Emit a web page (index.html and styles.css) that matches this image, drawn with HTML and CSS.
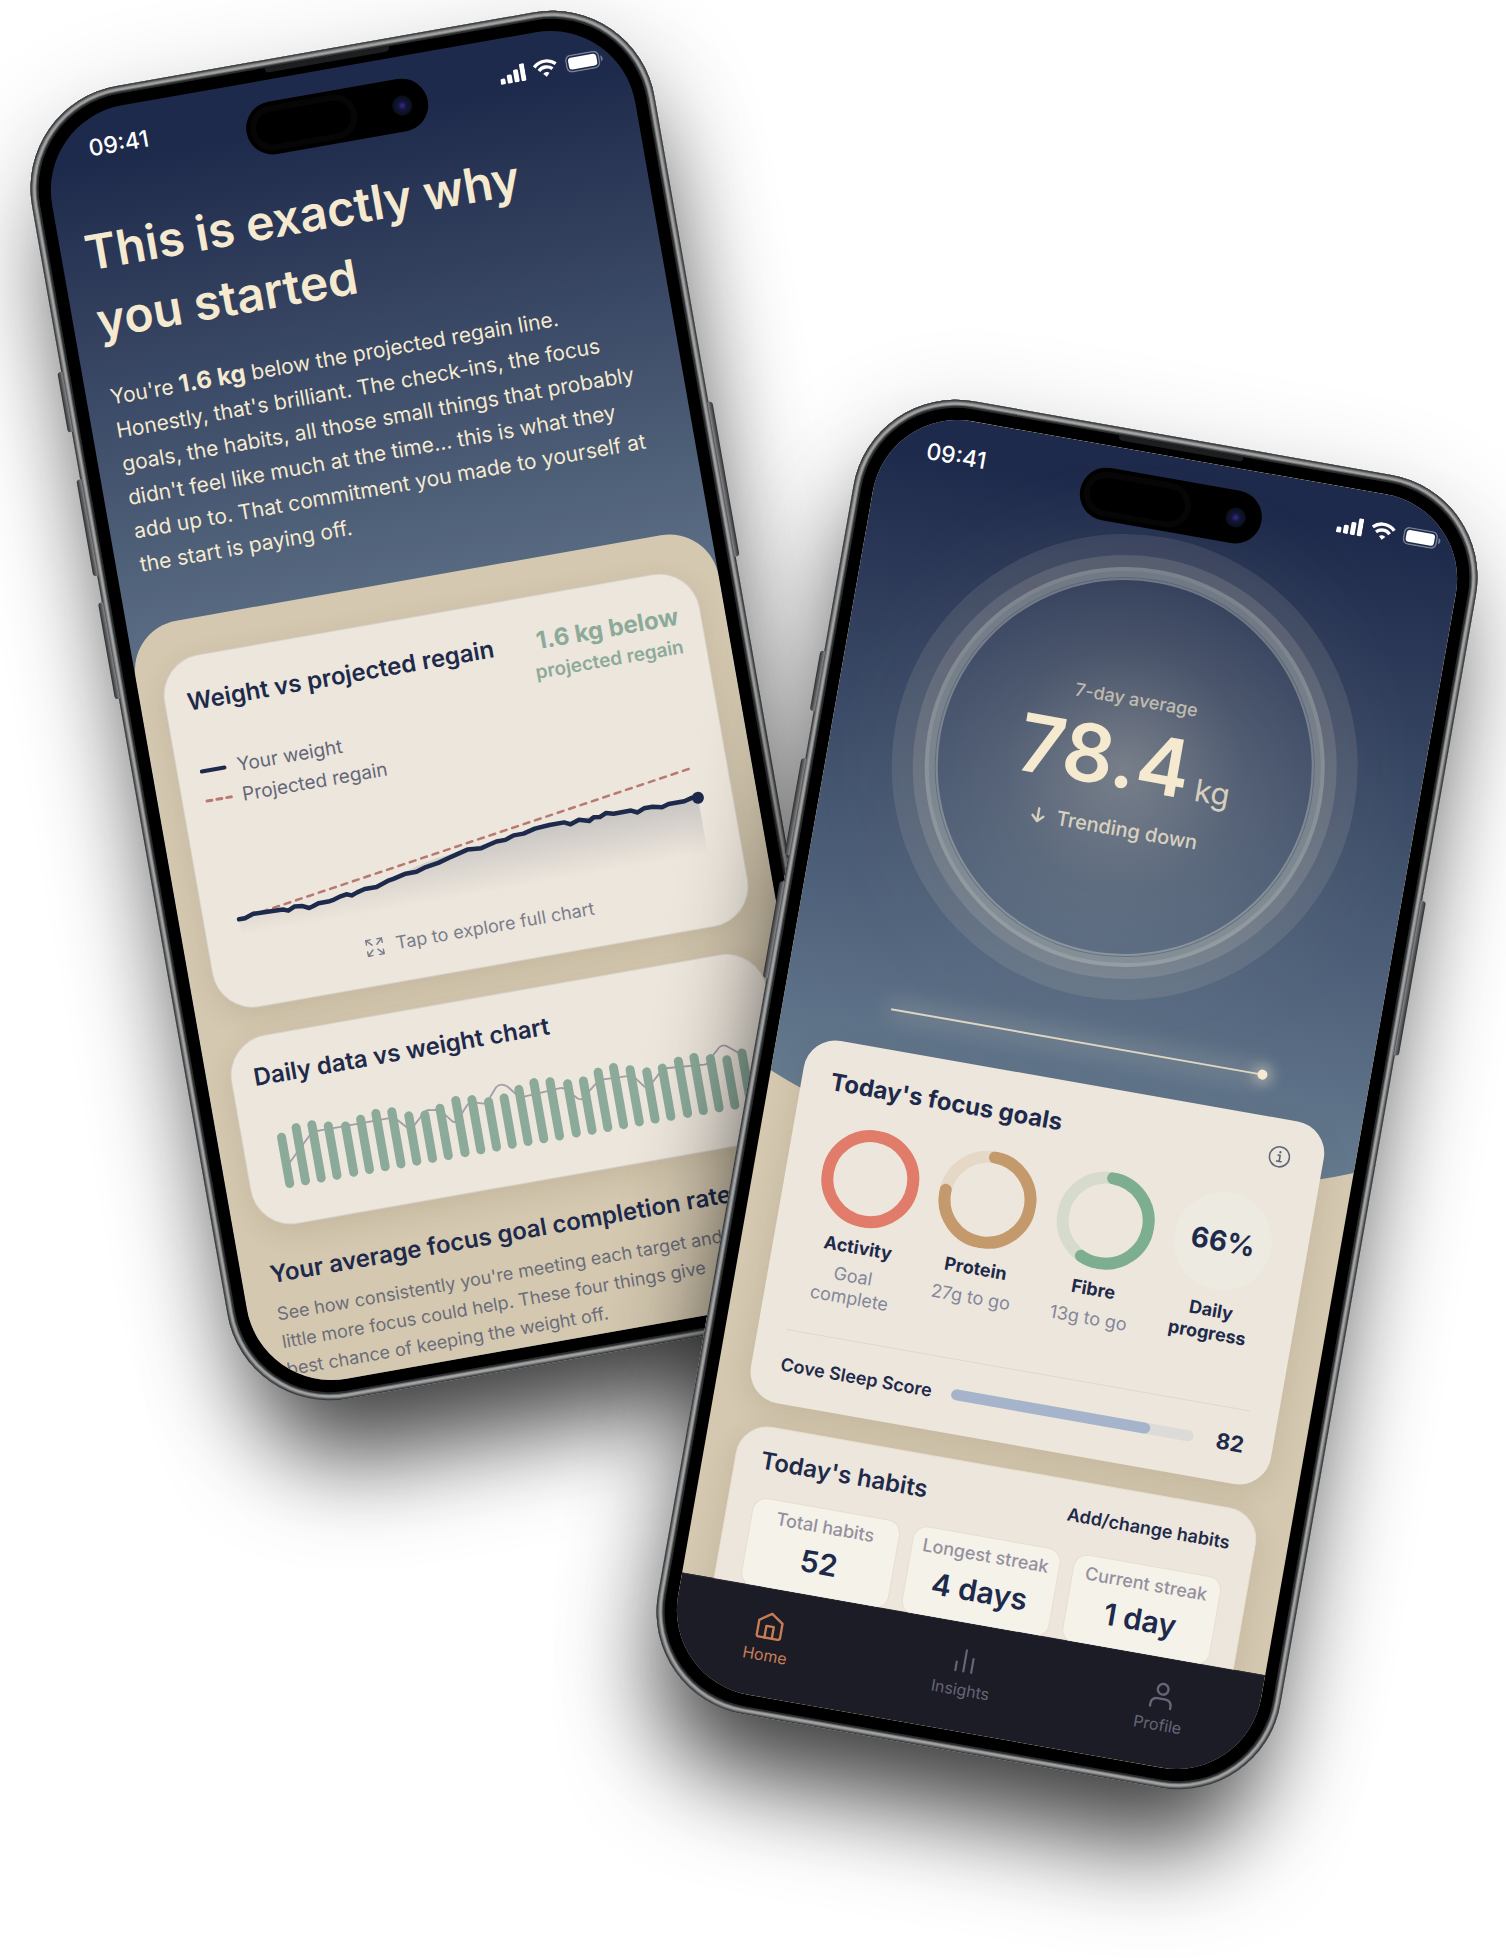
FILE: index.html
```html
<!DOCTYPE html>
<html lang="en">
<head>
    <meta charset="UTF-8">
    <meta name="viewport" content="width=device-width, initial-scale=1">
    <title>Cove</title>
    <link rel="stylesheet" href="styles.css">
</head>
<body>
    <main class="stage">

        <!-- Progress phone -->
        <section class="phone phone-left">
            <span class="side-btn action"></span>
            <span class="side-btn vol-up"></span>
            <span class="side-btn vol-down"></span>
            <span class="side-btn power"></span>
            <div class="bezel">
                <span class="earpiece"></span>
                <div class="screen screen-progress">
                    <div class="status-bar">
                        <span class="time">09:41</span>
                        <span class="status-icons">
                            <svg width="26" height="18" viewBox="0 0 26 18" fill="#fff">
                                <rect x="0" y="12" width="5" height="6" rx="1.5"/>
                                <rect x="7" y="9" width="5" height="9" rx="1.5"/>
                                <rect x="14" y="5" width="5" height="13" rx="1.5"/>
                                <rect x="21" y="0" width="5" height="18" rx="1.5"/>
                            </svg>
                            <svg width="25" height="18" viewBox="0 0 25 18" fill="none" stroke="#fff" stroke-width="3.4">
                                <path d="M1.6 6.4a15.4 15.4 0 0 1 21.8 0"/>
                                <path d="M5.6 10.7a9.7 9.7 0 0 1 13.8 0"/>
                                <path d="M12.5 17.6l-3.2-3.3a4.5 4.5 0 0 1 6.4 0z" fill="#fff" stroke="none"/>
                            </svg>
                            <svg width="38" height="18" viewBox="0 0 38 18">
                                <rect x="0.8" y="0.8" width="33" height="16.4" rx="5" fill="none" stroke="#fff" stroke-opacity=".4" stroke-width="1.4"/>
                                <rect x="3" y="3" width="28.6" height="12" rx="3" fill="#fff"/>
                                <path d="M35.6 6v6c1.3-.5 2-1.7 2-3s-.7-2.5-2-3z" fill="#fff" fill-opacity=".4"/>
                            </svg>
                        </span>
                    </div>
                    <div class="island"><span class="sensor"></span><span class="camera"></span></div>

                    <header class="intro">
                        <h1>This is exactly why<br>you started</h1>
                        <p>You're <strong>1.6 kg</strong> below the projected regain line.<br>Honestly, that's brilliant. The check-ins, the focus goals, the habits, all those small things that probably didn't feel like much at the time... this is what they add up to. That commitment you made to yourself at the start is paying off.</p>
                    </header>

                    <div class="sheet">
                        <article class="card card-weight">
                            <div class="card-head">
                                <h2>Weight vs projected regain</h2>
                                <div class="delta">
                                    <b>1.6 kg below</b>
                                    <span>projected regain</span>
                                </div>
                            </div>
                            <ul class="legend">
                                <li>
                                    <svg width="28" height="6" viewBox="0 0 28 6"><path d="M2 3h23" stroke="#1e2a4b" stroke-width="4" stroke-linecap="round"/></svg>
                                    Your weight
                                </li>
                                <li>
                                    <svg width="28" height="6" viewBox="0 0 28 6"><path d="M2 3h25" stroke="#b87a70" stroke-width="3" stroke-linecap="round" stroke-dasharray="5 5"/></svg>
                                    Projected regain
                                </li>
                            </ul>
                            <svg class="weight-chart" viewBox="0 0 498 110">
                                <defs>
                                    <linearGradient id="area" gradientUnits="userSpaceOnUse" x1="0" y1="44" x2="0" y2="102">
                                        <stop offset="0" stop-color="#1e2a4b" stop-opacity=".18"/>
                                        <stop offset="1" stop-color="#1e2a4b" stop-opacity="0"/>
                                    </linearGradient>
                                </defs>
                                <path fill="url(#area)" d="M13 85L28 82 58 83 84 86 110 82 142 77 166 73 196 64 219 59 250 56 280 52 308 50 320 47 350 46 393 44 418 46 449 48 472 46 486 44V102H13z"/>
                                <path fill="none" stroke="#b87a70" stroke-width="2.5" stroke-linecap="round" stroke-dasharray="6 6" d="M13 85L482 15"/>
                                <path fill="none" stroke="#1e2a4b" stroke-width="4.5" stroke-linecap="round" stroke-linejoin="round" d="M13 85L19 85 28 82 58 83 63 85 70 82 78 83 84 86 88 85 94 83 104 83 110 82 117 80 123 79 128 81 134 79 142 77 154 77 160 75 166 73 172 72 185 69 196 69 206 66 219 64 230 61 238 59 250 56 264 57 272 55 280 53 289 53 298 50 308 50 320 47 335 46 350 46 356 49 365 46 375 49 380 46 386 47 393 44 400 46 418 46 424 49 431 46 440 46 449 48 456 46 472 46 480 44 486 45"/>
                                <circle cx="486" cy="45" r="6" fill="#1e2a4b"/>
                            </svg>
                            <button type="button" class="explore">
                                <svg width="18" height="18" viewBox="0 0 18 18" fill="none" stroke="currentColor" stroke-width="1.5" stroke-linecap="round" stroke-linejoin="round">
                                    <path d="M1 5.5V1h4.5M1 1l5.5 5.5M12.5 1H17v4.5M17 1l-5.5 5.5M1 12.5V17h4.5M1 17l5.5-5.5M12.5 17H17v-4.5M17 17l-5.5-5.5"/>
                                </svg>
                                Tap to explore full chart
                            </button>
                        </article>

                        <article class="card card-daily">
                            <h2>Daily data vs weight chart</h2>
                            <svg class="daily-chart" viewBox="0 0 498 77">
                                <path fill="none" stroke="#a39da8" stroke-width="1.8" stroke-linejoin="round" d="M20 50L46 25Q50 22 56 23L74 23 128 23Q132 23 135 27L143 36Q146 40 149 35L161 24Q164 21 168 22L174 23Q178 24 181 28L188 37Q192 40 195 35L205 24Q208 21 212 22L222 25Q226 25 230 19L237 11Q242 7 248 12L256 22Q260 26 265 25L300 23Q304 23 307 27L315 36Q320 40 324 34L337 24Q340 21 344 22L370 23Q374 23 377 28L383 36Q387 40 390 35L402 24Q405 21 410 22L446 25Q450 25 453 20L463 11Q468 7 473 12L484 21"/>
                                <path fill="none" stroke="#8caa9a" stroke-width="9" stroke-linecap="round" d="M17 70V23M33 70V16M49 70V16M65 70V20M82 70V23M98 70V19M114 70V16M130 70V17M146 70V24M162 70V26M178 70V22M195 70V17M211 70V19M227 70V24M243 70V23M259 70V17M275 70V13M291 70V15M308 70V20M324 70V20M340 70V14M356 70V12M372 70V17M388 70V22M404 70V21M421 70V17M437 70V16M453 70V20M469 70V24M485 70V20"/>
                            </svg>
                        </article>

                        <div class="goal-rate">
                            <h2>Your average focus goal completion rate</h2>
                            <p>See how consistently you're meeting each target and<br>little more focus could help. These four things give<br>best chance of keeping the weight off.</p>
                        </div>
                    </div>
                </div>
            </div>
        </section>

        <!-- Home phone -->
        <section class="phone phone-right">
            <span class="side-btn action"></span>
            <span class="side-btn vol-up"></span>
            <span class="side-btn vol-down"></span>
            <span class="side-btn power"></span>
            <div class="bezel">
                <span class="earpiece"></span>
                <div class="screen screen-home">
                    <div class="home-scroll">
                        <div class="home-sky"></div>
                        <div class="status-bar">
                            <span class="time">09:41</span>
                            <span class="status-icons">
                                <svg width="26" height="18" viewBox="0 0 26 18" fill="#fff">
                                    <rect x="0" y="12" width="5" height="6" rx="1.5"/>
                                    <rect x="7" y="9" width="5" height="9" rx="1.5"/>
                                    <rect x="14" y="5" width="5" height="13" rx="1.5"/>
                                    <rect x="21" y="0" width="5" height="18" rx="1.5"/>
                                </svg>
                                <svg width="25" height="18" viewBox="0 0 25 18" fill="none" stroke="#fff" stroke-width="3.4">
                                    <path d="M1.6 6.4a15.4 15.4 0 0 1 21.8 0"/>
                                    <path d="M5.6 10.7a9.7 9.7 0 0 1 13.8 0"/>
                                    <path d="M12.5 17.6l-3.2-3.3a4.5 4.5 0 0 1 6.4 0z" fill="#fff" stroke="none"/>
                                </svg>
                                <svg width="38" height="18" viewBox="0 0 38 18">
                                    <rect x="0.8" y="0.8" width="33" height="16.4" rx="5" fill="none" stroke="#fff" stroke-opacity=".4" stroke-width="1.4"/>
                                    <rect x="3" y="3" width="28.6" height="12" rx="3" fill="#fff"/>
                                    <path d="M35.6 6v6c1.3-.5 2-1.7 2-3s-.7-2.5-2-3z" fill="#fff" fill-opacity=".4"/>
                                </svg>
                            </span>
                        </div>
                        <div class="island"><span class="sensor"></span><span class="camera"></span></div>

                        <div class="orb">
                            <span class="orb-label">7-day average</span>
                            <div class="orb-value">78.4<small>kg</small></div>
                            <div class="orb-trend">
                                <svg width="14" height="16" viewBox="0 0 14 16" fill="none" stroke="currentColor" stroke-width="2.4" stroke-linecap="round" stroke-linejoin="round">
                                    <path d="M7 1.5v13M1.5 9L7 14.5 12.5 9"/>
                                </svg>
                                Trending down
                            </div>
                        </div>
                        <div class="glow-line"></div>

                        <article class="card card-goals">
                            <div class="card-head">
                                <h2>Today's focus goals</h2>
                                <button type="button" class="info" aria-label="About focus goals">
                                    <svg width="22" height="22" viewBox="0 0 22 22" fill="none" stroke="#5d6678" stroke-width="1.6" stroke-linecap="round" stroke-linejoin="round">
                                        <circle cx="11" cy="11" r="10"/>
                                        <path d="M9.5 9.5h2v6M9 15.5h4.5"/>
                                        <path d="M11.2 6.2v.3" stroke-width="2.2"/>
                                    </svg>
                                </button>
                            </div>
                            <div class="goals">
                                <div class="goal">
                                    <svg class="ring" viewBox="0 0 98 98"><circle cx="49" cy="49" r="43" stroke="#e17c6a"/></svg>
                                    <b>Activity</b>
                                    <span>Goal complete</span>
                                </div>
                                <div class="goal">
                                    <svg class="ring" viewBox="0 0 98 98">
                                        <circle cx="49" cy="49" r="43" stroke="#e5d8c6"/>
                                        <circle cx="49" cy="49" r="43" stroke="#c49a6c" pathLength="100" stroke-dasharray="76 100" stroke-linecap="round"/>
                                    </svg>
                                    <b>Protein</b>
                                    <span>27g to go</span>
                                </div>
                                <div class="goal">
                                    <svg class="ring" viewBox="0 0 98 98">
                                        <circle cx="49" cy="49" r="43" stroke="#d7dbcd"/>
                                        <circle cx="49" cy="49" r="43" stroke="#7dae8f" pathLength="100" stroke-dasharray="57 100" stroke-linecap="round"/>
                                    </svg>
                                    <b>Fibre</b>
                                    <span>13g to go</span>
                                </div>
                                <div class="goal">
                                    <div class="ring percent">66%</div>
                                    <b>Daily progress</b>
                                </div>
                            </div>
                            <div class="sleep">
                                <span>Cove Sleep Score</span>
                                <div class="track"><div class="fill" style="width: 82%"></div></div>
                                <b>82</b>
                            </div>
                        </article>

                        <article class="card card-habits">
                            <div class="card-head">
                                <h2>Today's habits</h2>
                                <a href="#habits">Add/change habits</a>
                            </div>
                            <div class="tiles" id="habits">
                                <div class="tile"><span>Total habits</span><b>52</b></div>
                                <div class="tile"><span>Longest streak</span><b>4 days</b></div>
                                <div class="tile"><span>Current streak</span><b>1 day</b></div>
                            </div>
                        </article>
                    </div>

                    <nav class="tab-bar">
                        <a href="#home" class="active">
                            <svg width="30" height="30" viewBox="0 0 28 28" fill="none" stroke="currentColor" stroke-width="2.2" stroke-linecap="round" stroke-linejoin="round">
                                <path d="M3 9.5L14 2l11 7.5V23a2 2 0 0 1-2 2H5a2 2 0 0 1-2-2z"/>
                                <path d="M10.5 25V14h7v11"/>
                            </svg>
                            Home
                        </a>
                        <a href="#insights">
                            <svg width="30" height="30" viewBox="0 0 28 28" fill="none" stroke="currentColor" stroke-width="2" stroke-linecap="round">
                                <path d="M6.5 24v-8M14 24V4M21.5 24V11"/>
                            </svg>
                            Insights
                        </a>
                        <a href="#profile">
                            <svg width="30" height="30" viewBox="0 0 28 28" fill="none" stroke="currentColor" stroke-width="2.2" stroke-linecap="round" stroke-linejoin="round">
                                <circle cx="14" cy="8" r="5"/>
                                <path d="M4.5 25v-2.5A5.500 5.500 0 0 1 10 17h8a5.500 5.500 0 0 1 5.500 5.500V25"/>
                            </svg>
                            Profile
                        </a>
                    </nav>
                </div>
            </div>
        </section>

    </main>
</body>
</html>
```
FILE: styles.css
```css
* {
    margin: 0;
    padding: 0;
    box-sizing: border-box;
}
body {
    background-color: #fff;
    font-family: Inter, "Liberation Sans", sans-serif;
    color: #1e2a4b;
    overflow: hidden;
}
h2 {
    font-size: 24px;
    line-height: 30px;
    font-weight: 600;
}
a {
    color: inherit;
    text-decoration: none;
}
button {
    font: inherit;
    border: none;
    background: none;
    cursor: pointer;
}
.stage {
    display: flex;
    justify-content: center;
    align-items: flex-start;
    padding: 39px 0 198px 2px;
}

/* device */
.phone {
    position: relative;
    flex: none;
    width: 632px;
    height: 1333px;
    padding: 8px;
    border-radius: 104px;
    background: #3a3b3c;
    box-shadow:
        0 80px 100px -24px rgba(0, 0, 0, .7),
        0 30px 110px rgba(0, 0, 0, .2);
}
.phone::before {
    content: "";
    position: absolute;
    inset: 0;
    border-radius: 104px;
    box-shadow:
        inset 0 0 0 1px #3a3b3c,
        inset 0 0 0 2px #5c5e60,
        inset 0 0 1px 3px #808284,
        inset 0 0 1px 5px #a6a8a9,
        inset 0 0 1px 6px #6c6e6f,
        inset 0 0 0 8px #2a2b2c;
}
.phone-left {
    transform: rotate(-10deg);
}
.phone-right {
    margin-left: -6px;
    margin-top: 389px;
    transform: rotate(10deg);
}
.bezel {
    position: relative;
    height: 100%;
    padding: 12px;
    border-radius: 96px;
    background: #000;
}
.earpiece {
    position: absolute;
    top: 0;
    left: 50%;
    width: 126px;
    height: 5px;
    margin-left: -63px;
    border-radius: 0 0 4px 4px;
    background: #1d1e1f;
}
.side-btn {
    position: absolute;
    left: -4px;
    width: 5px;
    border-radius: 3px 0 0 3px;
    background: linear-gradient(90deg, #2c2d2e, #85878a);
}
.action {
    top: 272px;
    height: 61px;
}
.vol-up {
    top: 381px;
    height: 98px;
}
.vol-down {
    top: 506px;
    height: 98px;
}
.power {
    left: auto;
    right: -4px;
    top: 414px;
    height: 157px;
    border-radius: 0 3px 3px 0;
    background: linear-gradient(270deg, #2c2d2e, #85878a);
}
.screen {
    position: relative;
    height: 100%;
    border-radius: 86px;
    overflow: hidden;
    display: flex;
    flex-direction: column;
}
.status-bar {
    display: flex;
    flex: none;
    justify-content: space-between;
    align-items: center;
    height: 74px;
    padding: 0 24px 0 46px;
    color: #fff;
}
.time {
    font-size: 23px;
    font-weight: 500;
}
.status-icons {
    display: flex;
    align-items: center;
    gap: 8px;
}
.island {
    position: absolute;
    z-index: 1;
    top: 22px;
    left: 50%;
    width: 184px;
    height: 53px;
    margin-left: -92px;
    border-radius: 27px;
    background: #000;
    display: flex;
    align-items: center;
    justify-content: space-between;
    padding: 0 16px 0 4px;
}
.sensor {
    width: 108px;
    height: 45px;
    border-radius: 23px;
    border: 6px solid #060607;
}
.camera {
    width: 20px;
    height: 20px;
    border-radius: 50%;
    background: radial-gradient(circle, #3a2a8c 0, #14143a 30%, #0a1220 60%, #05070b 100%);
}

/* progress screen */
.screen-progress {
    background: linear-gradient(180deg, #1e2a4b 50px, #5a6c83 540px);
}
.intro {
    flex: none;
    padding: 31px 38px 44px 24px;
    color: #f5ead0;
}
.intro h1 {
    font-size: 48px;
    line-height: 69px;
    font-weight: 600;
    margin-bottom: 26px;
}
.intro p {
    font-size: 21px;
    line-height: 34px;
}
.intro strong {
    font-size: 24px;
    line-height: 24px;
    font-weight: 700;
}
.sheet {
    flex: none;
    display: flex;
    flex-direction: column;
    gap: 30px;
    padding: 38px 25px;
    border-radius: 50px 50px 0 0;
    background: #d4c8b0;
}
.card {
    background: #ede6dc;
    border-radius: 40px;
    box-shadow: 0 8px 28px rgba(90, 75, 40, .14);
}
.card-head {
    display: flex;
    justify-content: space-between;
    align-items: flex-start;
}
.sheet .card {
    padding: 30px 22px 25px;
    box-shadow: 0 0 0 1px #d8d1cb, 0 8px 28px rgba(90, 75, 40, .14);
}
.card-weight h2 {
    white-space: nowrap;
}
.delta {
    display: flex;
    flex-direction: column;
    align-items: flex-end;
    color: #8caa9a;
}
.delta b {
    font-size: 24px;
    line-height: 30px;
    font-weight: 700;
}
.delta span {
    font-size: 19px;
    line-height: 32px;
    font-weight: 600;
}
.legend {
    list-style: none;
    margin-top: 8px;
}
.legend li {
    display: flex;
    align-items: center;
    gap: 10px;
    font-size: 19px;
    line-height: 30px;
    color: #646779;
}
.weight-chart {
    display: block;
    width: 100%;
    margin-top: 22px;
    overflow: visible;
}
.explore {
    display: flex;
    align-items: center;
    gap: 12px;
    margin: 13px auto 0;
    font-size: 18px;
    line-height: 26px;
    color: #7a7d8c;
}
.sheet .card-daily {
    padding: 25px 22px 33px;
}
.daily-chart {
    display: block;
    width: 100%;
    margin-top: 25px;
}
.goal-rate {
    padding: 2px 0 0 4px;
}
.goal-rate h2 {
    white-space: nowrap;
}
.goal-rate p {
    margin-top: 11px;
    font-size: 18px;
    line-height: 28px;
    color: #6b6d79;
    white-space: nowrap;
}

/* home screen */
.screen-home {
    background: #d4c8b0;
}
.home-scroll {
    position: relative;
    flex: 1;
    min-height: 0;
    overflow: hidden;
}
.home-scroll > * {
    position: relative;
}
.home-scroll > .island,
.home-scroll > .home-sky {
    position: absolute;
}
.home-sky {
    top: 0;
    left: -20%;
    right: -20%;
    height: 725px;
    border-radius: 0 0 50% 50% / 0 0 170px 170px;
    background: linear-gradient(180deg, #1e2a4b 40px, #667b90 690px);
}
.orb {
    width: 378px;
    height: 378px;
    margin: 51px auto 0;
    padding-bottom: 6px;
    border-radius: 50%;
    border: 2px solid rgba(235, 230, 210, .32);
    background: radial-gradient(circle, rgba(245, 234, 208, .32) 0, rgba(245, 234, 208, .13) 45%, rgba(245, 234, 208, .08) 70%);
    box-shadow:
        0 0 0 1px rgba(50, 62, 92, .35),
        0 0 0 7px rgba(70, 85, 110, .2),
        0 0 0 11px rgba(225, 232, 215, .26),
        0 0 0 23px rgba(245, 234, 208, .13),
        0 0 0 44px rgba(245, 234, 208, .1),
        0 0 90px 60px rgba(245, 234, 208, .04);
    display: flex;
    flex-direction: column;
    align-items: center;
    justify-content: center;
    color: #f5ead0;
}
.orb-label {
    font-size: 18px;
    line-height: 24px;
    font-weight: 500;
    opacity: .65;
}
.orb-value {
    margin-top: 8px;
    font-size: 80px;
    line-height: 80px;
    font-weight: 600;
}
.orb-value small {
    margin-left: 8px;
    font-size: 31px;
    line-height: 31px;
    font-weight: 400;
    opacity: .8;
}
.orb-trend {
    display: flex;
    align-items: center;
    gap: 12px;
    margin-top: 18px;
    font-size: 20px;
    line-height: 24px;
    font-weight: 500;
    opacity: .8;
}
.glow-line {
    width: 377px;
    height: 2px;
    margin: 89px auto 39px;
    background: #ddd6c2;
    box-shadow: 0 0 24px 4px rgba(245, 234, 208, .32);
}
.glow-line::after {
    content: "";
    position: absolute;
    right: -5px;
    top: -4px;
    width: 10px;
    height: 10px;
    border-radius: 50%;
    background: #f5ead0;
    box-shadow: 0 0 14px 4px rgba(245, 234, 208, .5);
}
.card-goals,
.card-habits {
    margin: 0 32px 24px;
    border-radius: 32px;
}
.card-goals {
    padding: 27px 25px 26px;
}
.card-goals .card-head {
    padding: 0 8px 0 4px;
}
.card-goals h2 {
    font-weight: 700;
}
.info {
    display: flex;
}
.goals {
    display: grid;
    grid-template-columns: repeat(4, 1fr);
    margin-top: 25px;
}
.goal {
    display: flex;
    flex-direction: column;
    align-items: center;
    text-align: center;
    font-size: 18px;
}
.ring {
    width: 98px;
    height: 98px;
    fill: none;
    stroke-width: 12px;
}
.ring circle {
    transform: rotate(-90deg);
    transform-origin: center;
}
.percent {
    display: flex;
    align-items: center;
    justify-content: center;
    border-radius: 50%;
    background: #edeae1;
    font-size: 28px;
    font-weight: 700;
}
.goal b {
    max-width: 90px;
    margin-top: 9px;
    line-height: 23px;
    font-weight: 700;
}
.goal span {
    max-width: 90px;
    margin-top: 7px;
    line-height: 22px;
    color: #83879a;
}
.sleep {
    display: flex;
    align-items: center;
    gap: 20px;
    margin: 30px 4px 0;
    padding-top: 21px;
    border-top: 1px solid #dcd9ce;
    font-size: 18px;
    line-height: 27px;
    font-weight: 600;
}
.track {
    flex: 1;
    height: 11px;
    border-radius: 6px;
    background: #dddbd7;
}
.fill {
    height: 100%;
    border-radius: 6px;
    background: #a6b4cb;
}
.sleep b {
    margin-left: 3px;
    font-size: 22px;
    font-weight: 700;
}
.card-habits {
    padding: 19px 25px 30px;
    border: 1px solid #e9ddd0;
}
.card-habits a {
    font-size: 18px;
    line-height: 30px;
    font-weight: 600;
}
.tiles {
    display: grid;
    grid-template-columns: repeat(3, 1fr);
    gap: 13px;
    margin-top: 21px;
}
.tile {
    display: flex;
    flex-direction: column;
    align-items: center;
    gap: 7px;
    padding: 7px 0 16px;
    border: 1px solid #e9ddd0;
    border-radius: 14px;
    background: #f5f2ea;
    white-space: nowrap;
}
.tile span {
    font-size: 18px;
    line-height: 22px;
    font-weight: 500;
    color: #94909e;
}
.tile b {
    font-size: 30px;
    line-height: 36px;
    font-weight: 600;
}
.tab-bar {
    display: flex;
    justify-content: space-around;
    height: 109px;
    padding-top: 22px;
    border-top: 1px solid #2b2b38;
    background: #1c1c26;
}
.tab-bar a {
    display: flex;
    flex-direction: column;
    align-items: center;
    gap: 4px;
    font-size: 16px;
    line-height: 20px;
    color: #666678;
}
.tab-bar a.active {
    color: #c97d55;
}
```
